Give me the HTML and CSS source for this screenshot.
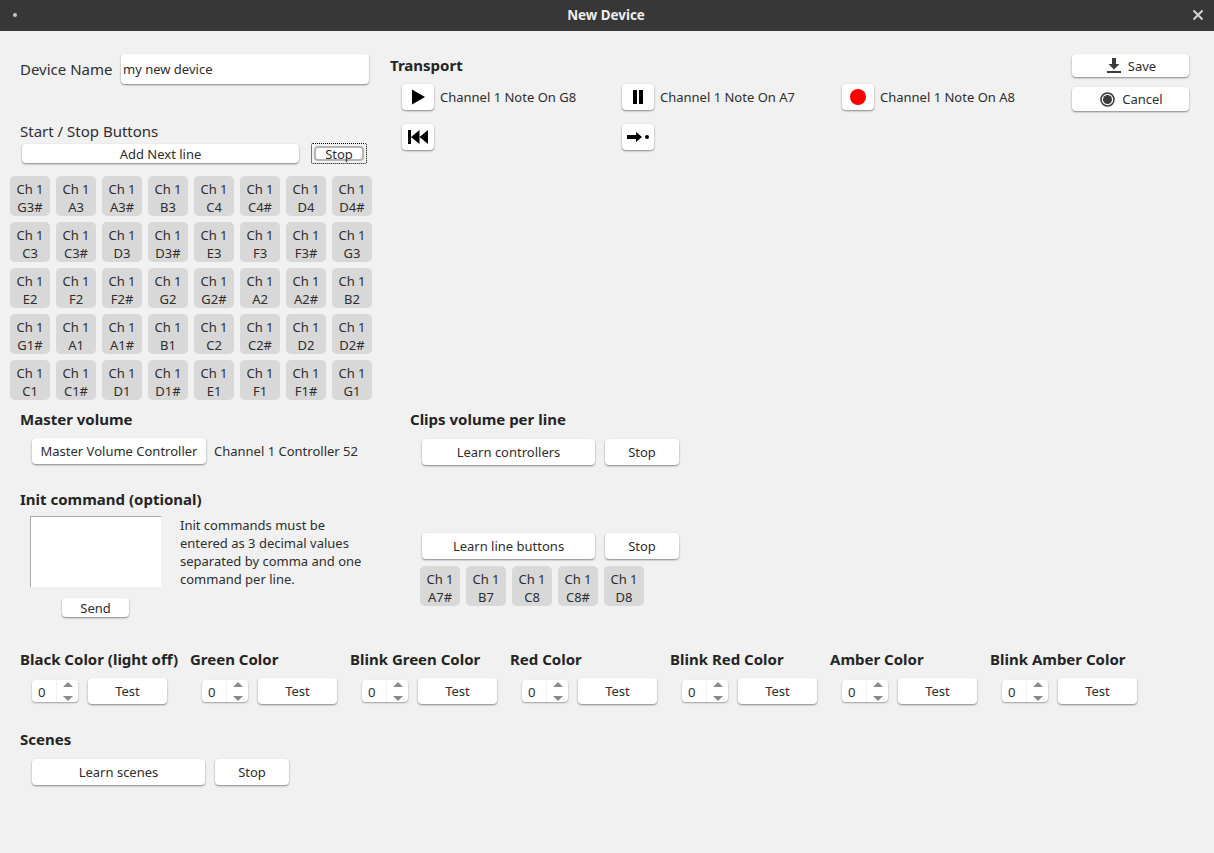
FILE: index.html
```html
<!DOCTYPE html>
<html>
  <head>
    <meta charset="utf-8">
    <title>New Device</title>
    <link rel="stylesheet" href="styles.css">
  </head>
  <body>
    <header class="titlebar">
      <span class="title-dot"></span>
      <span class="title-text">New Device</span>
      <svg class="title-close" width="12" height="12" viewBox="0 0 12 12"><path d="M1.5 1.5l9 9M10.5 1.5l-9 9" stroke="#d4d4d4" stroke-width="2" fill="none"/></svg>
    </header>

    <div class="top">
      <div class="left-col">
        <div class="name-row">
          <label class="name-label">Device Name</label>
          <div class="name-input">my new device</div>
        </div>
        <div class="plain-title">Start / Stop Buttons</div>
        <div class="add-row">
          <button class="btn add-next">Add Next line</button>
          <div class="focus-stop"><div class="focus-inner">Stop</div></div>
        </div>
        <div class="pads">
          <div class="pad">Ch 1<br>G3#</div><div class="pad">Ch 1<br>A3</div><div class="pad">Ch 1<br>A3#</div><div class="pad">Ch 1<br>B3</div><div class="pad">Ch 1<br>C4</div><div class="pad">Ch 1<br>C4#</div><div class="pad">Ch 1<br>D4</div><div class="pad">Ch 1<br>D4#</div>
          <div class="pad">Ch 1<br>C3</div><div class="pad">Ch 1<br>C3#</div><div class="pad">Ch 1<br>D3</div><div class="pad">Ch 1<br>D3#</div><div class="pad">Ch 1<br>E3</div><div class="pad">Ch 1<br>F3</div><div class="pad">Ch 1<br>F3#</div><div class="pad">Ch 1<br>G3</div>
          <div class="pad">Ch 1<br>E2</div><div class="pad">Ch 1<br>F2</div><div class="pad">Ch 1<br>F2#</div><div class="pad">Ch 1<br>G2</div><div class="pad">Ch 1<br>G2#</div><div class="pad">Ch 1<br>A2</div><div class="pad">Ch 1<br>A2#</div><div class="pad">Ch 1<br>B2</div>
          <div class="pad">Ch 1<br>G1#</div><div class="pad">Ch 1<br>A1</div><div class="pad">Ch 1<br>A1#</div><div class="pad">Ch 1<br>B1</div><div class="pad">Ch 1<br>C2</div><div class="pad">Ch 1<br>C2#</div><div class="pad">Ch 1<br>D2</div><div class="pad">Ch 1<br>D2#</div>
          <div class="pad">Ch 1<br>C1</div><div class="pad">Ch 1<br>C1#</div><div class="pad">Ch 1<br>D1</div><div class="pad">Ch 1<br>D1#</div><div class="pad">Ch 1<br>E1</div><div class="pad">Ch 1<br>F1</div><div class="pad">Ch 1<br>F1#</div><div class="pad">Ch 1<br>G1</div>
        </div>
      </div>

      <div class="transport">
        <h2 class="transport-title">Transport</h2>
        <div class="transport-grid">
          <div class="transport-item">
            <button class="btn icon-btn"><svg width="16" height="16" viewBox="0 0 16 16"><path d="M2 0.500l13 7.500-13 7.500z" fill="#000"/></svg></button>
            <span>Channel 1 Note On G8</span>
          </div>
          <div class="transport-item">
            <button class="btn icon-btn"><svg width="16" height="16" viewBox="0 0 16 16"><path d="M3 1h4v14H3zM9 1h4v14H9z" fill="#000"/></svg></button>
            <span>Channel 1 Note On A7</span>
          </div>
          <div class="transport-item">
            <button class="btn icon-btn"><svg width="16" height="16" viewBox="0 0 16 16"><circle cx="8" cy="8" r="8" fill="#f00"/></svg></button>
            <span>Channel 1 Note On A8</span>
          </div>
          <div class="transport-item">
            <button class="btn icon-btn"><svg width="20" height="14" viewBox="0 0 20 14"><path d="M0 0h3v14H0zM3 7l8.500-7v14zM11.500 7l8.500-7v14z" fill="#000"/></svg></button>
          </div>
          <div class="transport-item">
            <button class="btn icon-btn"><svg width="22" height="12" viewBox="0 0 22 12"><path d="M0 4h9V1l6 5-6 5V8H0z" fill="#000"/><circle cx="20" cy="6" r="2" fill="#000"/></svg></button>
          </div>
        </div>
      </div>

      <div class="actions">
        <button class="btn action-btn">
          <svg width="14" height="15" viewBox="0 0 14 15"><path d="M5 0h4v6h3.500L7 11.500 1.500 6H5zM0 13h14v2H0z" fill="#3b3b3b"/></svg>
          Save
        </button>
        <button class="btn action-btn cancel-btn">
          <svg width="15" height="15" viewBox="0 0 15 15"><circle cx="7.500" cy="7.500" r="6.500" fill="none" stroke="#3b3b3b" stroke-width="1.500"/><circle cx="7.500" cy="7.500" r="4.500" fill="#3b3b3b"/></svg>
          Cancel
        </button>
      </div>
    </div>

    <div class="middle">
      <div class="middle-left">
        <h2 class="section-title">Master volume</h2>
        <div class="master-row">
          <button class="btn master-btn">Master Volume Controller</button>
          <span>Channel 1 Controller 52</span>
        </div>
        <h2 class="section-title init-title">Init command (optional)</h2>
        <div class="init-row">
          <div class="init-box">
            <div class="init-text"></div>
            <button class="btn send-btn">Send</button>
          </div>
          <p class="init-help">Init commands must be entered as 3 decimal values separated by comma and one command per line.</p>
        </div>
      </div>
      <div class="middle-right">
        <h2 class="section-title">Clips volume per line</h2>
        <div class="learn-row">
          <button class="btn learn-btn">Learn controllers</button>
          <button class="btn stop-btn">Stop</button>
        </div>
        <div class="learn-row line-row">
          <button class="btn learn-btn">Learn line buttons</button>
          <button class="btn stop-btn">Stop</button>
        </div>
        <div class="line-pads">
          <div class="pad">Ch 1<br>A7#</div><div class="pad">Ch 1<br>B7</div><div class="pad">Ch 1<br>C8</div><div class="pad">Ch 1<br>C8#</div><div class="pad">Ch 1<br>D8</div>
        </div>
      </div>
    </div>

    <div class="colors">
      <div class="color-item first-color">
        <h2 class="section-title">Black Color (light off)</h2>
        <div class="color-ctl"><div class="spin"><span class="spin-val">0</span><span class="spin-arrows"><i class="up"></i><i class="down"></i></span></div><button class="btn test-btn">Test</button></div>
      </div>
      <div class="color-item">
        <h2 class="section-title">Green Color</h2>
        <div class="color-ctl"><div class="spin"><span class="spin-val">0</span><span class="spin-arrows"><i class="up"></i><i class="down"></i></span></div><button class="btn test-btn">Test</button></div>
      </div>
      <div class="color-item">
        <h2 class="section-title">Blink Green Color</h2>
        <div class="color-ctl"><div class="spin"><span class="spin-val">0</span><span class="spin-arrows"><i class="up"></i><i class="down"></i></span></div><button class="btn test-btn">Test</button></div>
      </div>
      <div class="color-item">
        <h2 class="section-title">Red Color</h2>
        <div class="color-ctl"><div class="spin"><span class="spin-val">0</span><span class="spin-arrows"><i class="up"></i><i class="down"></i></span></div><button class="btn test-btn">Test</button></div>
      </div>
      <div class="color-item">
        <h2 class="section-title">Blink Red Color</h2>
        <div class="color-ctl"><div class="spin"><span class="spin-val">0</span><span class="spin-arrows"><i class="up"></i><i class="down"></i></span></div><button class="btn test-btn">Test</button></div>
      </div>
      <div class="color-item">
        <h2 class="section-title">Amber Color</h2>
        <div class="color-ctl"><div class="spin"><span class="spin-val">0</span><span class="spin-arrows"><i class="up"></i><i class="down"></i></span></div><button class="btn test-btn">Test</button></div>
      </div>
      <div class="color-item">
        <h2 class="section-title">Blink Amber Color</h2>
        <div class="color-ctl"><div class="spin"><span class="spin-val">0</span><span class="spin-arrows"><i class="up"></i><i class="down"></i></span></div><button class="btn test-btn">Test</button></div>
      </div>
    </div>

    <div class="scenes">
      <h2 class="section-title">Scenes</h2>
      <div class="learn-row scenes-row">
        <button class="btn learn-btn">Learn scenes</button>
        <button class="btn stop-btn">Stop</button>
      </div>
    </div>
  </body>
</html>
```

FILE: styles.css
```css
* {
  box-sizing: border-box;
}

html, body {
  height: 100%;
}

body {
  margin: 0;
  overflow: hidden;
  background-color: #f1f1f1;
  color: #2e2e2e;
  font-family: "Noto Sans", sans-serif;
  font-size: 13px;
  line-height: 18px;
}

.titlebar {
  display: flex;
  align-items: center;
  justify-content: center;
  position: relative;
  height: 31px;
  padding-bottom: 2px;
  padding-right: 2px;
  background-color: #373737;
}

.title-text {
  color: #eeeeee;
  font-size: 13.4px;
  font-weight: 700;
}

.title-dot {
  position: absolute;
  left: 13px;
  top: 13px;
  width: 4px;
  height: 4px;
  border-radius: 50%;
  background-color: #c8c8c8;
}

.title-close {
  position: absolute;
  left: 1192px;
  top: 9px;
}

.btn {
  display: block;
  margin: 0;
  padding: 0;
  border: 0;
  border-radius: 4px;
  background-color: #fff;
  box-shadow: 0 1px 2px rgba(0, 0, 0, 0.45);
  color: #2e2e2e;
  font-family: inherit;
  font-size: 13px;
  line-height: 18px;
}

.section-title {
  margin: 0;
  padding-bottom: 2px;
  color: #242424;
  font-size: 15px;
  font-weight: 700;
  line-height: 18px;
}

/* top area */
.top {
  display: flex;
  height: 369px;
}

.left-col {
  width: 390px;
  flex: none;
}

.name-row {
  display: flex;
  align-items: center;
  margin-top: 23px;
  padding-left: 20px;
}

.name-label {
  width: 101px;
  font-size: 15px;
}

.name-input {
  width: 248px;
  height: 30px;
  padding: 6px 2px;
  border-radius: 4px;
  background-color: #fff;
  box-shadow: 0 1px 2px rgba(0, 0, 0, 0.45);
}

.plain-title {
  margin-top: 37px;
  padding-left: 20px;
  font-size: 15px;
  line-height: 20px;
}

.add-row {
  display: flex;
  align-items: flex-start;
  padding-left: 22px;
  margin-top: 3px;
}

.add-next {
  width: 277px;
  height: 19px;
}

.focus-stop {
  width: 56px;
  height: 21px;
  margin-left: 12px;
  margin-top: -1px;
  padding: 2px;
  border: 1px dotted #000;
  border-radius: 2px;
}

.focus-inner {
  height: 15px;
  border: 2px solid #b4b4b4;
  border-radius: 4px;
  background-color: #fff;
  text-align: center;
  line-height: 12px;
}

.pads {
  display: grid;
  grid-template-columns: repeat(8, 40px);
  gap: 6px;
  margin-top: 12px;
  margin-left: 10px;
}

.pad {
  width: 40px;
  height: 40px;
  padding-top: 4px;
  border-radius: 5px;
  background-color: #d8d8d8;
  text-align: center;
}

.transport {
  width: 682px;
  flex: none;
  padding-top: 25px;
}

.transport-title {
  margin: 0;
  padding-bottom: 2px;
  color: #242424;
  font-size: 15px;
  font-weight: 700;
  line-height: 18px;
}

.transport-grid {
  display: grid;
  grid-template-columns: repeat(3, 220px);
  grid-auto-rows: 26px;
  row-gap: 14px;
  margin-top: 8px;
  padding-left: 12px;
}

.transport-item {
  display: flex;
  align-items: center;
  gap: 6px;
}

.icon-btn {
  display: flex;
  align-items: center;
  justify-content: center;
  width: 32px;
  height: 26px;
}

.actions {
  display: flex;
  flex-direction: column;
  gap: 10px;
  padding-top: 23px;
}

.action-btn {
  display: flex;
  align-items: center;
  justify-content: center;
  gap: 7px;
  width: 117px;
  height: 23px;
  padding-left: 2px;
}

.cancel-btn {
  height: 24px;
}

/* master volume, init command, clips */
.middle {
  display: flex;
  padding-top: 10px;
}

.middle-left {
  width: 410px;
  flex: none;
  padding-left: 20px;
}

.master-row {
  display: flex;
  align-items: center;
  gap: 8px;
  margin-top: 8px;
  padding-left: 12px;
}

.master-btn {
  width: 174px;
  height: 26px;
}

.init-title {
  margin-top: 26px;
}

.init-row {
  display: flex;
  margin-top: 6px;
  padding-left: 10px;
}

.init-box {
  width: 131px;
}

.init-text {
  height: 71px;
  border-top: 1px solid #a8a8a8;
  border-left: 1px solid #a8a8a8;
  background-color: #fff;
}

.send-btn {
  width: 67px;
  height: 19px;
  margin-top: 11px;
  margin-left: 32px;
}

.init-help {
  width: 185px;
  margin: 0 0 0 19px;
}

.middle-right {
  flex: 1;
}

.learn-row {
  display: flex;
  gap: 10px;
  margin-top: 9px;
  padding-left: 12px;
}

.line-row {
  margin-top: 68px;
}

.learn-btn {
  width: 173px;
  height: 26px;
}

.stop-btn {
  width: 74px;
  height: 26px;
}

.line-pads {
  display: flex;
  gap: 6px;
  margin-top: 7px;
  padding-left: 10px;
}

/* color rows */
.colors {
  display: flex;
  margin-top: 33px;
  padding-left: 20px;
}

.color-item {
  width: 160px;
  flex: none;
}

.first-color {
  width: 170px;
}

.color-ctl {
  display: flex;
  align-items: center;
  gap: 10px;
  margin-top: 8px;
  padding-left: 12px;
}

.spin {
  display: flex;
  width: 46px;
  height: 22px;
  border-radius: 4px;
  background-color: #fff;
  box-shadow: 0 1px 2px rgba(0, 0, 0, 0.35);
}

.spin-val {
  width: 25px;
  padding-top: 3px;
  padding-left: 6px;
  border-right: 1px solid #f1f1f1;
}

.spin-arrows {
  display: flex;
  flex-direction: column;
  justify-content: space-between;
  align-items: center;
  flex: 1;
  padding: 2px 0 1px;
}

.spin-arrows i {
  display: block;
  width: 0;
  height: 0;
  border-left: 5px solid transparent;
  border-right: 5px solid transparent;
}

.spin-arrows .up {
  border-bottom: 5px solid #8a8a8a;
}

.spin-arrows .down {
  border-top: 5px solid #8a8a8a;
}

.test-btn {
  width: 79px;
  height: 26px;
}

/* scenes */
.scenes {
  margin-top: 26px;
  padding-left: 20px;
}

.scenes-row {
  padding-left: 12px;
}
```
